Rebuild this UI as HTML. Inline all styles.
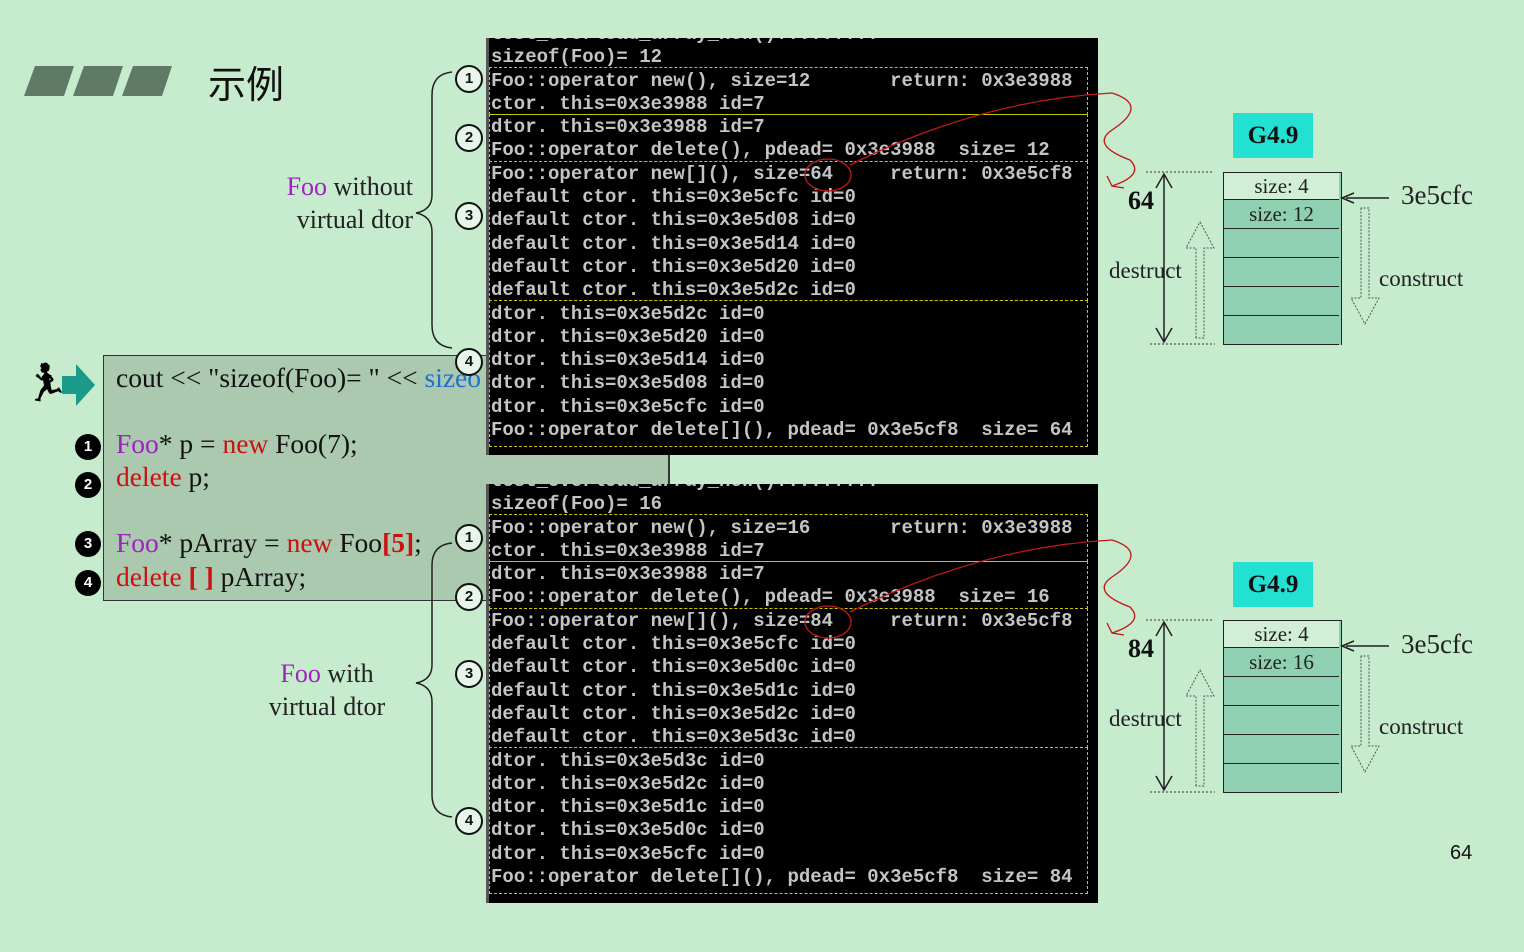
<!DOCTYPE html>
<html><head><meta charset="utf-8"><style>
body{margin:0;width:1524px;height:952px;background:#c6ebcd;position:relative;overflow:hidden;font-family:"Liberation Serif",serif}
.a{position:absolute}
.term{position:absolute;background:#000;overflow:hidden;border-left:3px solid #555}
.term pre{position:absolute;left:2px;margin:0;font:bold 19px/23.3px "Liberation Mono",monospace;color:#c4c4c4;letter-spacing:0}
.db{position:absolute;left:0;width:597px;border:1.5px dashed #c8c800}
.cn{position:absolute;width:24px;height:24px;border:2px solid #111;border-radius:50%;background:#e8f5ea;font:bold 15px/24px "Liberation Sans",sans-serif;text-align:center;color:#111}
.bn{position:absolute;width:26px;height:26px;border-radius:50%;background:#000;color:#fff;font:bold 15px/26px "Liberation Sans",sans-serif;text-align:center}
.code{font-size:27.5px;color:#111;position:absolute;white-space:nowrap}
.p{color:#a020c0}.r{color:#cc1010}
.lab{font-size:26px;color:#222;text-align:right;position:absolute;line-height:33px;white-space:nowrap}
.g{position:absolute;background:#22e0d2;font:bold 25px "Liberation Serif",serif;text-align:center;line-height:45px;width:80px;height:45px;color:#111}
.cell{position:absolute;left:0;width:115px;border-bottom:1.5px solid #222;font-size:21px;text-align:center;color:#222}
</style></head><body>

<svg class="a" style="left:20px;top:64px" width="160" height="34"><g fill="#5f7a66"><polygon points="15,2 54,2 44,32 4,32"/><polygon points="64,2 103,2 93,32 53,32"/><polygon points="113,2 152,2 142,32 102,32"/></g></svg>
<div class="a" style="left:208px;top:54px;font:38px 'Noto Sans CJK SC',sans-serif;color:#111">示例</div>

<div class="a" style="left:103px;top:355px;width:565px;height:244px;background:#abc9af;border:1.5px solid #333"></div>
<div class="a" style="left:668px;top:455px;width:0;height:30px;border-left:1.5px solid #333"></div>
<div class="code" style="left:116px;top:362px">cout &lt;&lt; "sizeof(Foo)= " &lt;&lt; <span style="color:#2070d0">sizeo</span></div>
<div class="code" style="left:116px;top:428px"><span class="p">Foo</span>* p = <span class="r">new</span> Foo(7);</div>
<div class="code" style="left:116px;top:461px"><span class="r">delete</span> p;</div>
<div class="code" style="left:116px;top:527px"><span class="p">Foo</span>* pArray = <span class="r">new</span> Foo<b class="r">[5]</b>;</div>
<div class="code" style="left:116px;top:561px"><span class="r">delete <b>[ ]</b></span> pArray;</div>
<div class="bn" style="left:75px;top:434px">1</div>
<div class="bn" style="left:75px;top:472px">2</div>
<div class="bn" style="left:75px;top:531px">3</div>
<div class="bn" style="left:75px;top:570px">4</div>
<div class="a" style="left:24px;top:362px;font-size:36px;filter:brightness(0)">🏃</div>
<svg class="a" style="left:62px;top:364px" width="34" height="42"><polygon points="0,12 14,12 14,0 33,21 14,42 14,30 0,30" fill="#1a9a88"/></svg>

<div class="lab" style="left:200px;top:170px;width:213px"><span class="p">Foo</span> without<br>virtual dtor</div>
<div class="lab" style="left:227px;top:657px;width:200px;text-align:center"><span class="p">Foo</span> with<br>virtual dtor</div>

<svg class="a" style="left:0;top:0" width="1524" height="952" fill="none" stroke="#222" stroke-width="1.5">
<path d="M452,72 Q432,74 432,95 L432,195 Q432,210 416,213 Q432,216 432,232 L432,325 Q432,346 452,348"/>
<path d="M452,543 Q432,545 432,565 L432,665 Q432,680 416,683 Q432,686 432,702 L432,795 Q432,815 452,817"/>
</svg>
<div class="cn" style="left:455px;top:65px">1</div>
<div class="cn" style="left:455px;top:124px">2</div>
<div class="cn" style="left:455px;top:202px">3</div>
<div class="cn" style="left:455px;top:348px">4</div>
<div class="cn" style="left:455px;top:524px">1</div>
<div class="cn" style="left:455px;top:583px">2</div>
<div class="cn" style="left:455px;top:660px">3</div>
<div class="cn" style="left:455px;top:807px">4</div>

<div class="term" style="left:486px;top:38px;width:609px;height:417px">
<pre style="top:-15px">test_overload_array_new().........
sizeof(Foo)= 12
Foo::operator new(), size=12       return: 0x3e3988
ctor. this=0x3e3988 id=7
dtor. this=0x3e3988 id=7
Foo::operator delete(), pdead= 0x3e3988  size= 12
Foo::operator new[](), size=64     return: 0x3e5cf8
default ctor. this=0x3e5cfc id=0
default ctor. this=0x3e5d08 id=0
default ctor. this=0x3e5d14 id=0
default ctor. this=0x3e5d20 id=0
default ctor. this=0x3e5d2c id=0
dtor. this=0x3e5d2c id=0
dtor. this=0x3e5d20 id=0
dtor. this=0x3e5d14 id=0
dtor. this=0x3e5d08 id=0
dtor. this=0x3e5cfc id=0
Foo::operator delete[](), pdead= 0x3e5cf8  size= 64</pre>
<div class="db" style="top:29px;height:46px"></div>
<div class="db" style="top:76px;height:46px;border-top-style:solid"></div>
<div class="db" style="top:123px;height:138px"></div>
<div class="db" style="top:262px;height:145px"></div>
</div>

<div class="term" style="left:486px;top:484px;width:609px;height:419px">
<pre style="top:-14px">test_overload_array_new().........
sizeof(Foo)= 16
Foo::operator new(), size=16       return: 0x3e3988
ctor. this=0x3e3988 id=7
dtor. this=0x3e3988 id=7
Foo::operator delete(), pdead= 0x3e3988  size= 16
Foo::operator new[](), size=84     return: 0x3e5cf8
default ctor. this=0x3e5cfc id=0
default ctor. this=0x3e5d0c id=0
default ctor. this=0x3e5d1c id=0
default ctor. this=0x3e5d2c id=0
default ctor. this=0x3e5d3c id=0
dtor. this=0x3e5d3c id=0
dtor. this=0x3e5d2c id=0
dtor. this=0x3e5d1c id=0
dtor. this=0x3e5d0c id=0
dtor. this=0x3e5cfc id=0
Foo::operator delete[](), pdead= 0x3e5cf8  size= 84</pre>
<div class="db" style="top:30px;height:46px"></div>
<div class="db" style="top:77px;height:46px;border-top-style:solid"></div>
<div class="db" style="top:124px;height:138px"></div>
<div class="db" style="top:263px;height:145px"></div>
</div>

<div class="g" style="left:1233px;top:113px">G4.9</div>
<div class="g" style="left:1233px;top:562px">G4.9</div>

<div class="a" style="left:1223px;top:172px;width:117px;height:172px;border:1.5px solid #222;border-bottom:none;background:#8fd0b2">
<div class="cell" style="top:0;height:26px;background:#d0efd6;line-height:26px">size: 4</div>
<div class="cell" style="top:27px;height:28px;line-height:28px">size: 12</div>
<div class="cell" style="top:56px;height:28px"></div>
<div class="cell" style="top:85px;height:28px"></div>
<div class="cell" style="top:114px;height:28px"></div>
<div class="cell" style="top:143px;height:28px"></div>
</div>
<div class="a" style="left:1223px;top:620px;width:117px;height:172px;border:1.5px solid #222;border-bottom:none;background:#8fd0b2">
<div class="cell" style="top:0;height:26px;background:#d0efd6;line-height:26px">size: 4</div>
<div class="cell" style="top:27px;height:28px;line-height:28px">size: 16</div>
<div class="cell" style="top:56px;height:28px"></div>
<div class="cell" style="top:85px;height:28px"></div>
<div class="cell" style="top:114px;height:28px"></div>
<div class="cell" style="top:143px;height:28px"></div>
</div>

<div class="a" style="left:1128px;top:186px;font:bold 26px 'Liberation Serif',serif;color:#111">64</div>
<div class="a" style="left:1128px;top:634px;font:bold 26px 'Liberation Serif',serif;color:#111">84</div>
<div class="a" style="left:1109px;top:258px;font-size:23px;color:#222">destruct</div>
<div class="a" style="left:1109px;top:706px;font-size:23px;color:#222">destruct</div>
<div class="a" style="left:1379px;top:266px;font-size:23px;color:#222">construct</div>
<div class="a" style="left:1379px;top:714px;font-size:23px;color:#222">construct</div>
<div class="a" style="left:1401px;top:180px;font-size:27px;color:#222">3e5cfc</div>
<div class="a" style="left:1401px;top:629px;font-size:27px;color:#222">3e5cfc</div>
<div class="a" style="left:1450px;top:842px;font:20px 'Liberation Sans',sans-serif;color:#111">64</div>

<svg class="a" style="left:0;top:0" width="1524" height="952" fill="none">
<g id="d1">
<path d="M1146,172 H1212 M1150,344 H1215" stroke="#333" stroke-dasharray="2,2"/>
<path d="M1164,174 V342 M1156,188 L1164,174 L1172,188 M1156,328 L1164,342 L1172,328" stroke="#222" stroke-width="1.5"/>
<path d="M1196,338 V248 H1186 L1200,222 L1214,248 H1204 V338 Z" stroke="#555" stroke-dasharray="2,1.5"/>
<path d="M1361,208 V298 H1351 L1365,324 L1379,298 H1369 V208 Z" stroke="#555" stroke-dasharray="2,1.5"/>
<path d="M1389,198 H1346 M1354,193 L1342,198 L1354,203" stroke="#222" stroke-width="1.5"/>
</g>
<use href="#d1" y="448"/>
<g stroke="#c01818" stroke-width="1.3">
<ellipse cx="828" cy="175" rx="23" ry="16"/>
<path d="M850,165 Q980,100 1112,93 Q1150,105 1112,130 Q1090,145 1130,160 Q1145,175 1112,186 M1107,176 L1112,186 L1124,188"/>
<ellipse cx="828" cy="622" rx="23" ry="16"/>
<path d="M850,612 Q980,547 1112,540 Q1150,552 1112,577 Q1090,592 1130,607 Q1145,622 1112,633 M1107,623 L1112,633 L1124,635"/>
</g>
</svg>
</body></html>
